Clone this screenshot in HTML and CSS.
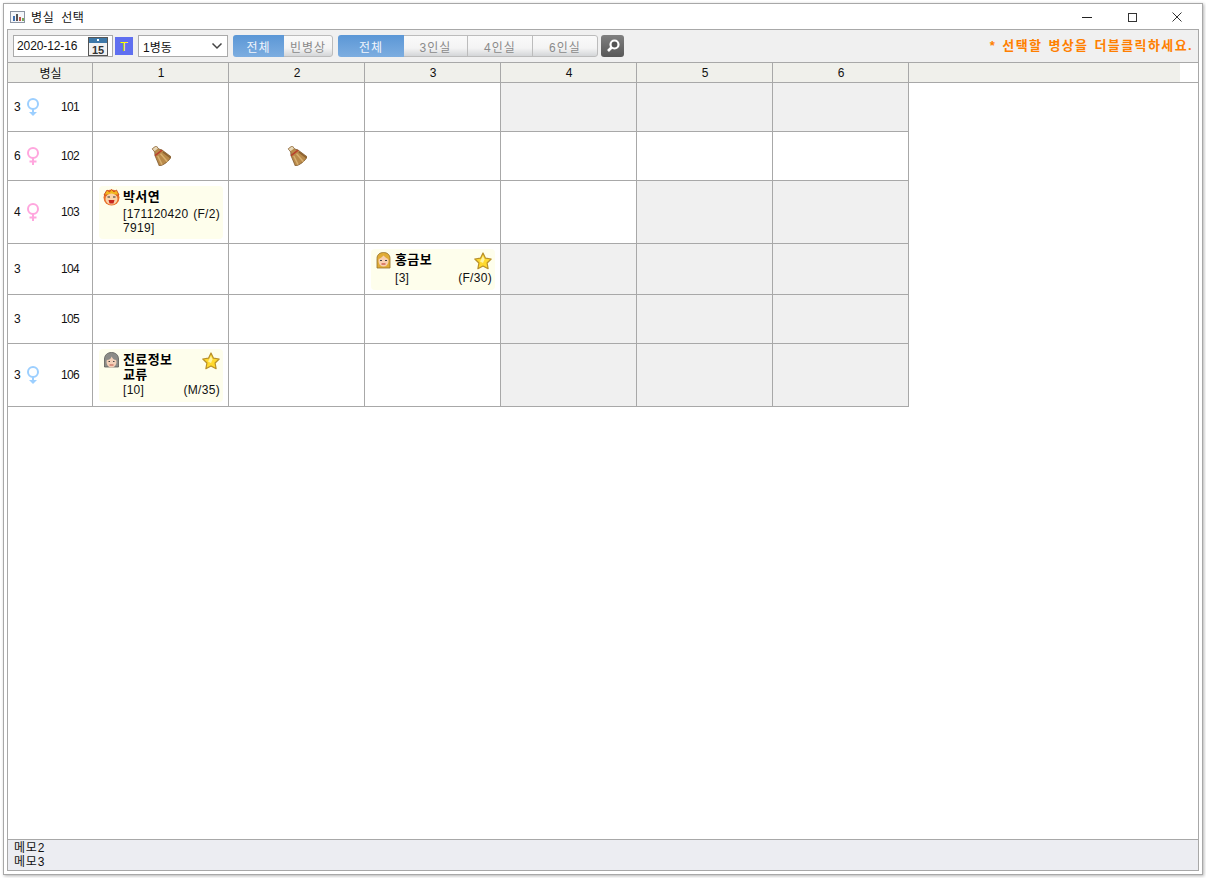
FILE: index.html
```html
<!DOCTYPE html>
<html lang="ko">
<head>
    <meta charset="UTF-8">
    <meta name="viewport" content="width=device-width, initial-scale=1.0">
    <title>병실 선택</title>
    <link rel="stylesheet" href="styles.css">
</head>
<body>
<svg class="defs" width="0" height="0">
    <symbol id="female" viewBox="0 0 14 18">
        <circle cx="7" cy="6" r="5" fill="none" stroke="currentColor" stroke-width="2"/>
        <path d="M7 11v7M3.5 14.5h7" fill="none" stroke="currentColor" stroke-width="2"/>
    </symbol>
    <symbol id="female-down" viewBox="0 0 14 18">
        <circle cx="7" cy="6" r="5" fill="none" stroke="currentColor" stroke-width="2"/>
        <path d="M7 11v5" fill="none" stroke="currentColor" stroke-width="2"/>
        <path d="M3 14h8l-4 4z" fill="currentColor"/>
    </symbol>
    <symbol id="bottle" viewBox="0 0 20 20">
        <g transform="rotate(-38 10 10)">
            <path d="M7.500 -1h5v4l2 3 3 11q-7.500 3-15 0l3-11 2-3z" fill="#b98a4a" stroke="#7a5428" stroke-width=".7"/>
            <path d="M7.800 -.7h4.400v3h-4.400z" fill="#e6d6b6"/>
            <path d="M7.500 8l-2 9.500M11 8l.5 10.500" stroke="#d8b070" stroke-width="1.400" fill="none"/>
            <path d="M14 8l2.500 9.500" stroke="#8a6030" stroke-width="1.400" fill="none"/>
            <path d="M5.500 6h9" stroke="#b8402c" stroke-width="1.500" fill="none"/>
        </g>
    </symbol>
    <symbol id="star" viewBox="0 0 18 18">
        <path d="M9 1l2.500 5.200 5.700.8-4.100 4 1 5.700L9 14l-5.100 2.700 1-5.700-4.100-4 5.700-.8z" fill="#ffd92e" stroke="#b8902a" stroke-width="1.200" stroke-linejoin="round"/>
        <path d="M9 4l1.500 3.500L9 11 6 9.500z" fill="#fff3a0"/>
    </symbol>
</svg>

<div class="window">
    <div class="titlebar">
        <svg class="title-icon" width="16" height="12" viewBox="0 0 16 12">
            <rect x="0.500" y="0.500" width="14" height="11" fill="#f4f6fa" stroke="#8c95a3"/>
            <rect x="3" y="5" width="2" height="5" fill="#3f6fb0"/>
            <rect x="6" y="3" width="2" height="7" fill="#555"/>
            <rect x="9" y="6" width="2" height="4" fill="#c0564a"/>
            <rect x="12" y="7" width="2" height="3" fill="#7aa65a"/>
        </svg>
        <span class="title-text">병실 선택</span>
        <div class="win-btns">
            <span class="win-btn"><svg width="10" height="10" viewBox="0 0 10 10"><path d="M0 5.500h10" stroke="#222"/></svg></span>
            <span class="win-btn"><svg width="10" height="10" viewBox="0 0 10 10"><rect x="1.500" y="1.500" width="8" height="8" fill="none" stroke="#333"/></svg></span>
            <span class="win-btn"><svg width="10" height="10" viewBox="0 0 10 10"><path d="M.5.500l9 9M9.500.500l-9 9" stroke="#333"/></svg></span>
        </div>
    </div>

    <div class="panel">
        <div class="toolbar">
            <div class="date-box">
                <span>2020-12-16</span>
                <svg class="cal" width="20" height="19" viewBox="0 0 20 19">
                    <rect x="0.500" y="0.500" width="19" height="18" fill="#f2f2f2" stroke="#555"/>
                    <rect x="1" y="1" width="18" height="5" fill="#3d78a8"/>
                    <rect x="9" y="2" width="2" height="2" fill="#fff"/>
                    <text x="10" y="16.500" text-anchor="middle" class="cal-num">15</text>
                </svg>
            </div>
            <span class="t-box">T</span>
            <div class="select-box">
                <span>1병동</span>
                <svg width="12" height="8" viewBox="0 0 12 8"><path d="M1.500 1.500 6 6l4.500-4.500" fill="none" stroke="#444" stroke-width="1.500"/></svg>
            </div>
            <div class="seg seg-a">
                <span class="seg-btn on w51">전체</span>
                <span class="seg-btn w49">빈병상</span>
            </div>
            <div class="seg seg-b">
                <span class="seg-btn on w66">전체</span>
                <span class="seg-btn w64">3인실</span>
                <span class="seg-btn w65">4인실</span>
                <span class="seg-btn w65">6인실</span>
            </div>
            <span class="search-btn">
                <svg width="16" height="16" viewBox="0 0 16 16">
                    <circle cx="9.500" cy="6.500" r="4" fill="#555" stroke="#fff" stroke-width="2.200"/>
                    <path d="M6.500 9.500 3 13" stroke="#fff" stroke-width="2.600"/>
                </svg>
            </span>
            <span class="notice">* 선택할 병상을 더블클릭하세요.</span>
        </div>

        <div class="head-row">
            <div class="head-cell">병실</div>
            <div class="head-cell">1</div>
            <div class="head-cell">2</div>
            <div class="head-cell">3</div>
            <div class="head-cell">4</div>
            <div class="head-cell">5</div>
            <div class="head-cell">6</div>
            <div class="head-fill"></div>
        </div>

        <div class="content">
            <div class="room-grid">
                <!-- 101 -->
                <div class="cell room"><span class="cnt">3</span><svg class="gender blue"><use href="#female-down"/></svg><span class="no">101</span></div>
                <div class="cell"></div>
                <div class="cell"></div>
                <div class="cell"></div>
                <div class="cell off"></div>
                <div class="cell off"></div>
                <div class="cell off"></div>
                <!-- 102 -->
                <div class="cell room"><span class="cnt">6</span><svg class="gender pink"><use href="#female"/></svg><span class="no">102</span></div>
                <div class="cell center"><svg class="bottle"><use href="#bottle"/></svg></div>
                <div class="cell center"><svg class="bottle"><use href="#bottle"/></svg></div>
                <div class="cell"></div>
                <div class="cell"></div>
                <div class="cell"></div>
                <div class="cell"></div>
                <!-- 103 -->
                <div class="cell room"><span class="cnt">4</span><svg class="gender pink"><use href="#female"/></svg><span class="no">103</span></div>
                <div class="cell has-card">
                    <div class="card">
                        <div class="card-head">
                            <svg class="face" viewBox="0 0 17 17">
                                <circle cx="8.500" cy="8.500" r="8" fill="#e8702a"/>
                                <path d="M1 6l3-5 2.500 2L8.500.500 11 3l2.500-2L16 6z" fill="#f2b81e" stroke="#c8401e" stroke-width=".8"/>
                                <ellipse cx="8.500" cy="10" rx="6" ry="5.500" fill="#fbd3a8"/>
                                <path d="M4.500 8h2.500M10 8h2.500" stroke="#333" stroke-width="1.200"/>
                                <path d="M5.500 11h6l-1 3.500h-4z" fill="#c8281e"/>
                            </svg>
                            <span class="name">박서연</span>
                        </div>
                        <div class="detail split"><span>[171120420</span><span>(F/2)</span></div>
                        <div class="detail">7919]</div>
                    </div>
                </div>
                <div class="cell"></div>
                <div class="cell"></div>
                <div class="cell"></div>
                <div class="cell off"></div>
                <div class="cell off"></div>
                <!-- 104 -->
                <div class="cell room"><span class="cnt">3</span><span class="gender"></span><span class="no">104</span></div>
                <div class="cell"></div>
                <div class="cell"></div>
                <div class="cell has-card">
                    <div class="card">
                        <div class="card-head">
                            <svg class="face" viewBox="0 0 17 17">
                                <path d="M2 16V6.500C2 2.500 5 .500 8.500.500S15 2.500 15 6.500V16z" fill="#e0ac36" stroke="#96702a" stroke-width=".8"/>
                                <ellipse cx="8.500" cy="9" rx="5" ry="5.500" fill="#f8cfb0"/>
                                <path d="M3.500 7c2-.5 4-2 5-4 1 2 3 3.500 5 4V4l-5-2-5 2z" fill="#e0ac36"/>
                                <path d="M5 8.500h2M10 8.500h2" stroke="#444" stroke-width="1.200"/>
                                <path d="M6.500 12h4" stroke="#c8483c" stroke-width="1.200"/>
                            </svg>
                            <span class="name">홍금보</span>
                            <svg class="star"><use href="#star"/></svg>
                        </div>
                        <div class="detail split"><span>[3]</span><span>(F/30)</span></div>
                    </div>
                </div>
                <div class="cell off"></div>
                <div class="cell off"></div>
                <div class="cell off"></div>
                <!-- 105 -->
                <div class="cell room"><span class="cnt">3</span><span class="gender"></span><span class="no">105</span></div>
                <div class="cell"></div>
                <div class="cell"></div>
                <div class="cell"></div>
                <div class="cell off"></div>
                <div class="cell off"></div>
                <div class="cell off"></div>
                <!-- 106 -->
                <div class="cell room"><span class="cnt">3</span><svg class="gender blue"><use href="#female-down"/></svg><span class="no">106</span></div>
                <div class="cell has-card">
                    <div class="card">
                        <div class="card-head">
                            <svg class="face" viewBox="0 0 17 17">
                                <path d="M1.500 15V7C1.500 3 4.500.500 8.500.500S15.500 3 15.500 7v8z" fill="#8c8c88" stroke="#5c5c58" stroke-width=".8"/>
                                <ellipse cx="8.500" cy="10" rx="5" ry="5.500" fill="#f4d0b8"/>
                                <path d="M3.500 8c3 0 5-1.500 5-4 1 2.500 2 4 5 4V5L8.500 3l-5 2z" fill="#8c8c88"/>
                                <path d="M5.500 9.500h1.500M10 9.500h1.500" stroke="#444" stroke-width="1.200"/>
                                <path d="M6.500 13h4" stroke="#c8685c" stroke-width="1.200"/>
                            </svg>
                            <span class="name">진료정보<br>교류</span>
                            <svg class="star"><use href="#star"/></svg>
                        </div>
                        <div class="detail split"><span>[10]</span><span>(M/35)</span></div>
                    </div>
                </div>
                <div class="cell"></div>
                <div class="cell"></div>
                <div class="cell off"></div>
                <div class="cell off"></div>
                <div class="cell off"></div>
            </div>
        </div>

        <div class="memo">메모2<br>메모3</div>
    </div>
</div>
</body>
</html>
```

FILE: styles.css
```css
html, body {
    width: 100%;
    height: 100%;
}

body {
    margin: 0;
    padding: 0;
    background: #fff;
    color: #111;
    font-family: "Liberation Sans", "Noto Sans CJK KR", sans-serif;
    font-size: 12px;
    overflow: hidden;
}

.defs {
    position: absolute;
}

.window {
    box-sizing: border-box;
    width: 1200px;
    height: 872px;
    margin: 3px 0 0 3px;
    padding: 0 3px 3px;
    display: flex;
    flex-direction: column;
    background: #fff;
    border: 1px solid #a8a8a8;
    box-shadow: 1px 1px 3px rgba(0, 0, 0, 0.3);
}

/* title bar */
.titlebar {
    height: 25px;
    flex: none;
    display: flex;
    align-items: center;
    padding-left: 3px;
}

.title-icon {
    margin-right: 5px;
}

.title-text {
    font-size: 12px;
    letter-spacing: 0.6px;
    word-spacing: 3px;
}

.win-btns {
    margin-left: auto;
    display: flex;
}

.win-btn {
    width: 45px;
    height: 25px;
    display: flex;
    align-items: center;
    justify-content: center;
}

/* main panel */
.panel {
    flex: 1;
    min-height: 0;
    display: flex;
    flex-direction: column;
    border: 1px solid #a8a8a8;
}

.toolbar {
    box-sizing: border-box;
    height: 33px;
    flex: none;
    display: flex;
    align-items: center;
    padding: 0 5px;
    background: #f0f0f0;
    border-bottom: 1px solid #a8a8a8;
}

.date-box {
    box-sizing: border-box;
    width: 100px;
    height: 22px;
    display: flex;
    align-items: center;
    justify-content: space-between;
    padding: 0 4px 0 3px;
    background: #fff;
    border: 1px solid #aaa;
    letter-spacing: -0.1px;
}

.cal-num {
    font-size: 11px;
    font-weight: bold;
    fill: #333;
}

.t-box {
    width: 18px;
    height: 18px;
    margin-left: 2px;
    display: flex;
    align-items: center;
    justify-content: center;
    background: #5f6ff0;
    color: #ffff00;
    font-size: 13px;
}

.select-box {
    box-sizing: border-box;
    width: 90px;
    height: 22px;
    margin-left: 5px;
    padding: 0 4px;
    display: flex;
    align-items: center;
    justify-content: space-between;
    background: #fff;
    border: 1px solid #aaa;
}

.seg {
    display: flex;
    height: 22px;
    border-radius: 3px;
    overflow: hidden;
}

.seg-a {
    margin-left: 5px;
}

.seg-b {
    margin-left: 5px;
}

.seg-btn {
    box-sizing: border-box;
    display: flex;
    align-items: center;
    justify-content: center;
    color: #8a8a8a;
    letter-spacing: 1px;
    background: linear-gradient(#fafafa 0%, #f4f4f4 60%, #d4d6d8 100%);
    border: 1px solid #bcbcbc;
    border-left: none;
}

.seg-btn:last-child {
    border-radius: 0 3px 3px 0;
}

.seg-btn.on {
    color: #f2f6fc;
    background: linear-gradient(#5b97d6, #7cade0);
    border: none;
}

.w49 { width: 49px; }
.w51 { width: 51px; }
.w64 { width: 64px; }
.w65 { width: 65px; }
.w66 { width: 66px; }

.search-btn {
    width: 23px;
    height: 22px;
    margin-left: 3px;
    display: flex;
    align-items: center;
    justify-content: center;
    border-radius: 3px;
    background: linear-gradient(#808080, #585858);
}

.notice {
    margin-left: auto;
    padding-bottom: 3px;
    color: #ff7f00;
    font-size: 13px;
    font-weight: bold;
    letter-spacing: 1.4px;
    word-spacing: 1px;
}

/* header + rooms */
.head-row {
    box-sizing: border-box;
    height: 20px;
    flex: none;
    display: grid;
    grid-template-columns: 85px repeat(6, 136px) 271px;
    border-bottom: 1px solid #a8a8a8;
}

.head-cell {
    box-sizing: border-box;
    display: flex;
    align-items: center;
    justify-content: center;
    padding-left: 1px;
    background: #f0f0eb;
    border-right: 1px solid #a8a8a8;
}

.head-fill {
    background: #f0f0eb;
}

.content {
    flex: 1;
    min-height: 0;
    background: #fff;
}

.room-grid {
    display: grid;
    grid-template-columns: 85px repeat(6, 136px);
    grid-template-rows: 49px 49px 63px 51px 49px 63px;
    width: 901px;
}

.cell {
    box-sizing: border-box;
    border-right: 1px solid #a8a8a8;
    border-bottom: 1px solid #a8a8a8;
}

.off {
    background: #f0f0f0;
}

.center {
    display: flex;
    align-items: center;
    justify-content: center;
}

.room {
    display: flex;
    align-items: center;
    padding-left: 6px;
}

.cnt {
    width: 12px;
}

.gender {
    width: 14px;
    height: 18px;
    flex: none;
}

.blue { color: #9ccfff; }
.pink { color: #ffa6de; }

.no {
    margin-left: 21px;
    letter-spacing: -0.7px;
}

.bottle {
    width: 20px;
    height: 20px;
}

.has-card {
    display: flex;
    padding: 5px 5px 4px 6px;
}

.card {
    box-sizing: border-box;
    flex: 1;
    padding: 3px 3px 0 4px;
    background: #fefeec;
    border-radius: 4px;
    letter-spacing: 0.3px;
}

.card-head {
    display: flex;
    align-items: flex-start;
}

.face {
    width: 17px;
    height: 17px;
    flex: none;
    margin-right: 3px;
}

.name {
    flex: 1;
    font-size: 13px;
    font-weight: bold;
    line-height: 15px;
    letter-spacing: 0.4px;
    color: #000;
}

.star {
    width: 18px;
    height: 18px;
    flex: none;
}

.detail {
    margin-left: 20px;
    line-height: 15px;
}

.detail + .detail {
    margin-top: -1px;
}

.split {
    margin-top: 1px;
    display: flex;
    justify-content: space-between;
}

.memo {
    box-sizing: border-box;
    height: 31px;
    flex: none;
    padding: 1px 6px 0;
    line-height: 14px;
    background: #ecedf2;
    border-top: 1px solid #a8a8a8;
    letter-spacing: 0.8px;
}
```
